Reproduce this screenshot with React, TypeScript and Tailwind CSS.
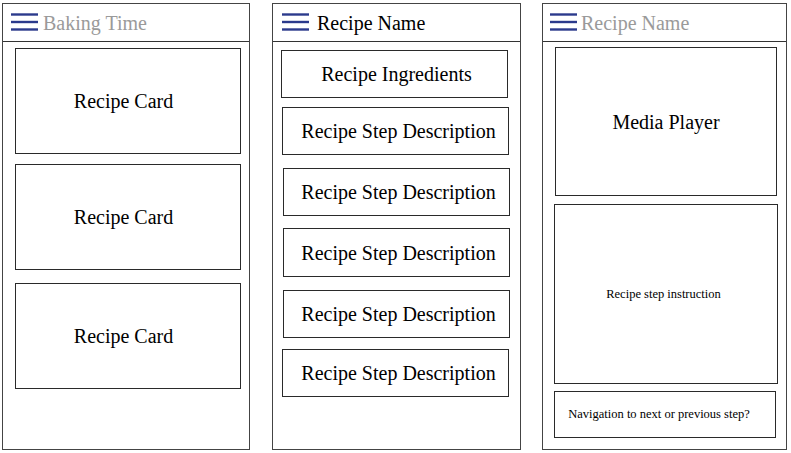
import React from 'react';

const serif = { fontFamily: '"Liberation Serif", "Times New Roman", serif' };

const Burger = ({ className = '' }: { className?: string }) => (
    <svg width="27" height="20" viewBox="0 0 27 20" className={className}>
        <g stroke="#2b3a8c" strokeWidth="2.4" strokeLinecap="butt">
            <line x1="0" y1="1.5" x2="27" y2="1.5" />
            <line x1="0" y1="9" x2="27" y2="9" />
            <line x1="0" y1="16.5" x2="27" y2="16.5" />
        </g>
    </svg>
);

const Header = ({ title, muted, gap }: { title: string; muted?: boolean; gap: string }) => (
    <div className="h-[38px] border-b border-[#333] flex items-center shrink-0">
        <Burger className={gap} />
        <span className={`text-[20px] leading-none ${muted ? 'text-[#9a9a9a]' : 'text-black'}`}>{title}</span>
    </div>
);

const Box = ({ className, children }: { className: string; children: React.ReactNode }) => (
    <div className={`border border-[#2a2a2a] flex items-center justify-center text-black shrink-0 ${className}`}>
        {children}
    </div>
);

export default function App() {
    return (
        <div className="w-[791px] h-[453px] bg-white flex pt-[3px] pl-[2px]" style={serif}>
            {/* Recipe list */}
            <div className="w-[248px] h-[447px] border border-[#444] flex flex-col">
                <Header title="Baking Time" muted gap="ml-[8px] mr-[5px]" />
                <div className="flex flex-col pl-[12px]">
                    <Box className="w-[226px] h-[106px] mt-[6px] pr-[9px] text-[20px]">Recipe Card</Box>
                    <Box className="w-[226px] h-[106px] mt-[10px] pr-[9px] text-[20px]">Recipe Card</Box>
                    <Box className="w-[226px] h-[106px] mt-[13px] pr-[9px] text-[20px]">Recipe Card</Box>
                </div>
            </div>

            {/* Recipe detail */}
            <div className="w-[249px] h-[447px] ml-[22px] border border-[#444] flex flex-col">
                <Header title="Recipe Name" gap="ml-[9px] mr-[8px]" />
                <div className="flex flex-col text-[20px]">
                    <Box className="w-[227px] h-[48px] mt-[8px] ml-[8px] pl-[4px]">Recipe Ingredients</Box>
                    <Box className="w-[227px] h-[48px] mt-[9px] ml-[9px] pl-[6px]">Recipe Step Description</Box>
                    <Box className="w-[227px] h-[48px] mt-[13px] ml-[10px] pl-[4px]">Recipe Step Description</Box>
                    <Box className="w-[227px] h-[49px] mt-[12px] ml-[10px] pl-[4px]">Recipe Step Description</Box>
                    <Box className="w-[227px] h-[48px] mt-[13px] ml-[10px] pl-[4px]">Recipe Step Description</Box>
                    <Box className="w-[227px] h-[48px] mt-[11px] ml-[9px] pl-[6px]">Recipe Step Description</Box>
                </div>
            </div>

            {/* Step view */}
            <div className="w-[245px] h-[447px] ml-[21px] border border-[#444] flex flex-col">
                <Header title="Recipe Name" muted gap="ml-[7px] mr-[4px]" />
                <div className="flex flex-col">
                    <Box className="w-[222px] h-[149px] mt-[5px] ml-[12px] text-[20px]">Media Player</Box>
                    <Box className="w-[224px] h-[180px] mt-[8px] ml-[11px] pr-[5px] text-[12.5px]">Recipe step instruction</Box>
                    <Box className="w-[222px] h-[47px] mt-[7px] ml-[11px] pr-[12px] text-[12.5px]">Navigation to next or previous step?</Box>
                </div>
            </div>
        </div>
    );
}
